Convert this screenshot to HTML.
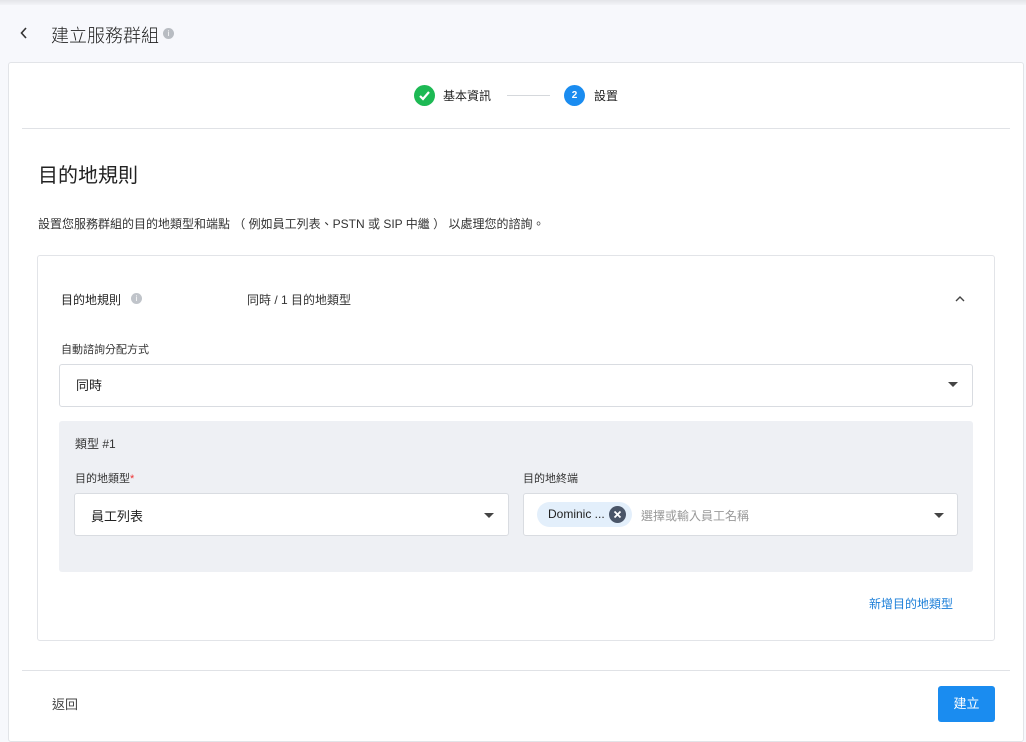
<!DOCTYPE html>
<html><head><meta charset="utf-8"><style>
*{box-sizing:border-box;margin:0;padding:0}
body{width:1026px;height:733px;overflow:hidden;background:#f7f8fc;font-family:"Liberation Sans","Noto Sans CJK TC",sans-serif;color:#222;position:relative}
.abs{position:absolute}
.topbar{left:0;top:0;width:1026px;height:5px;background:linear-gradient(#e4e5e9,#f3f4f8)}
.card{left:8px;top:62px;width:1016px;height:680px;background:#fff;border:1px solid #e2e4e8;border-radius:3px}
.ic{display:inline-block;border-radius:50%;text-align:center;color:#fff}
.sel{background:#fff;border:1px solid #d9dce1;border-radius:3px}
.caret{width:0;height:0;border-left:5px solid transparent;border-right:5px solid transparent;border-top:5px solid #444}
</style></head><body>
<div class="abs topbar"></div>
<svg class="abs" style="left:20px;top:27px" width="8" height="12"><path d="M6 1L1.5 6 6 11" stroke="#333" stroke-width="1.6" fill="none"/></svg>
<div class="abs" style="left:51px;top:22px;font-size:18px;color:#222;font-weight:300">建立服務群組</div>
<div class="abs ic" style="left:163px;top:28px;width:11px;height:11px;background:#b8bcc2;font-size:8px;line-height:11px">i</div>
<div class="abs card"></div>
<svg class="abs" style="left:414px;top:85px" width="21" height="21"><circle cx="10.5" cy="10.5" r="10.5" fill="#1db954"/><path d="M6 11l3 3 6-7" stroke="#fff" stroke-width="2.2" fill="none"/></svg>
<div class="abs" style="left:443px;top:87px;font-size:12px">基本資訊</div>
<div class="abs" style="left:507px;top:95px;width:43px;height:1px;background:#d5d8dc"></div>
<div class="abs ic" style="left:564px;top:85px;width:21px;height:21px;background:#1a8cf0;font-size:10px;line-height:21px;font-weight:bold">2</div>
<div class="abs" style="left:594px;top:87px;font-size:12px">設置</div>
<div class="abs" style="left:22px;top:128px;width:988px;height:1px;background:#e0e2e6"></div>
<div class="abs" style="left:38px;top:159px;font-size:20px;color:#222">目的地規則</div>
<div class="abs" style="left:38px;top:215px;font-size:12px;color:#333;white-space:nowrap">設置您服務群組的目的地類型和端點 （ 例如員工列表、PSTN 或 SIP 中繼 ） 以處理您的諮詢。</div>
<div class="abs" style="left:37px;top:255px;width:958px;height:386px;border:1px solid #e2e4e8;border-radius:3px"></div>
<div class="abs" style="left:61px;top:291px;font-size:12px">目的地規則</div>
<div class="abs ic" style="left:131px;top:293px;width:11px;height:11px;background:#c0c4ca;font-size:8px;line-height:11px">i</div>
<div class="abs" style="left:247px;top:291px;font-size:12px;color:#333">同時 / 1 目的地類型</div>
<svg class="abs" style="left:955px;top:295px" width="10" height="8"><path d="M1 6l4-4 4 4" stroke="#444" stroke-width="1.4" fill="none"/></svg>
<div class="abs" style="left:61px;top:341px;font-size:11px;color:#333">自動諮詢分配方式</div>
<div class="abs sel" style="left:59px;top:364px;width:914px;height:43px"></div>
<div class="abs" style="left:76px;top:375px;font-size:13px">同時</div>
<div class="abs caret" style="left:948px;top:382px"></div>
<div class="abs" style="left:59px;top:421px;width:914px;height:151px;background:#eef0f4;border-radius:3px"></div>
<div class="abs" style="left:75px;top:435px;font-size:12px;color:#333">類型 #1</div>
<div class="abs" style="left:75px;top:470px;font-size:11px;color:#333">目的地類型<span style="color:#e33">*</span></div>
<div class="abs" style="left:523px;top:470px;font-size:11px;color:#333">目的地終端</div>
<div class="abs sel" style="left:74px;top:493px;width:435px;height:43px"></div>
<div class="abs" style="left:91px;top:506px;font-size:13px">員工列表</div>
<div class="abs caret" style="left:484px;top:513px"></div>
<div class="abs sel" style="left:523px;top:493px;width:435px;height:43px"></div>
<div class="abs" style="left:537px;top:502px;width:95px;height:25px;background:#e3effb;border-radius:13px"></div>
<div class="abs" style="left:548px;top:507px;font-size:12px;color:#222">Dominic ...</div>
<svg class="abs" style="left:609px;top:506px" width="17" height="17"><circle cx="8.5" cy="8.5" r="8.5" fill="#4a5568"/><path d="M5.5 5.5l6 6M11.5 5.5l-6 6" stroke="#fff" stroke-width="1.8"/></svg>
<div class="abs" style="left:641px;top:507px;font-size:12px;color:#999">選擇或輸入員工名稱</div>
<div class="abs caret" style="left:934px;top:513px"></div>
<div class="abs" style="left:869px;top:595px;font-size:12px;color:#1a7ed8">新增目的地類型</div>
<div class="abs" style="left:22px;top:670px;width:988px;height:1px;background:#e0e2e6"></div>
<div class="abs" style="left:52px;top:694px;font-size:13px;color:#444">返回</div>
<div class="abs" style="left:938px;top:686px;width:57px;height:36px;background:#1a8cf0;border-radius:3px;color:#fff;font-size:13px;text-align:center;line-height:36px">建立</div>
</body></html>
